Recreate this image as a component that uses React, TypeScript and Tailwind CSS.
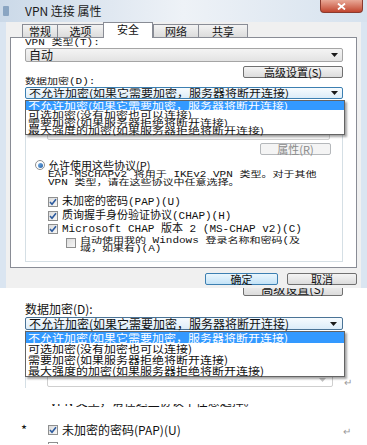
import React from 'react';

const cjk = "font-['Noto_Sans_CJK_SC',sans-serif]";
const mono = "font-['Liberation_Mono','Noto_Sans_CJK_SC',monospace]";

const OPTIONS = [
  '不允许加密(如果它需要加密，服务器将断开连接)',
  '可选加密(没有加密也可以连接)',
  '需要加密(如果服务器拒绝将断开连接)',
  '最大强度的加密(如果服务器拒绝将断开连接)',
];

function Arrow({ faint = false }: { faint?: boolean }) {
  return (
    <svg width="7" height="4" viewBox="0 0 7 4" className="shrink-0">
      <polygon points="0,0 7,0 3.5,4" fill={faint ? '#c4c4c4' : '#1a1a1a'} />
    </svg>
  );
}

function Check({ checked = true }: { checked?: boolean }) {
  return (
    <div className="flex h-[10px] w-[10px] shrink-0 items-center justify-center border border-[#8e8f8f] bg-gradient-to-br from-[#dcdcdc] to-[#f7f7f7]">
      {checked && (
        <svg width="8" height="8" viewBox="0 0 8 8">
          <path d="M1 4 L3 6.2 L7 1.2" stroke="#2c5a9e" strokeWidth="1.6" fill="none" />
        </svg>
      )}
    </div>
  );
}

// squashed text line, the dialog capture is vertically compressed
function Flat({ children }: { children: React.ReactNode }) {
  return (
    <div className="h-[8px] whitespace-nowrap leading-[8px]">
      <span className="block origin-top-left scale-y-[0.75] leading-[11px]">{children}</span>
    </div>
  );
}

function Dialog() {
  return (
    <div className="flex h-[288px] flex-col bg-[#dae5f1]">
      {/* title bar */}
      <div className="relative flex h-[22px] shrink-0 items-center bg-gradient-to-r from-[#cbd9e8] via-[#eef2f7] to-[#d6e2ee]">
        <div className="ml-[3px] h-[10px] w-[6px] rounded-[1px] bg-[#8aa5c2]" />
        <span className={`ml-[16px] text-[12px] text-[#1b1b1b] ${cjk}`}>VPN 连接 属性</span>
        <div className="absolute right-[4px] top-0 flex h-[13px] w-[43px] items-center justify-center rounded-b-[4px] border border-t-0 border-[#8a3a2e] bg-gradient-to-b from-[#e8a897] to-[#c0442e]">
          <svg width="9" height="7" viewBox="0 0 9 7">
            <path d="M1 0.5 L8 6.5 M8 0.5 L1 6.5" stroke="white" strokeWidth="1.8" />
          </svg>
        </div>
      </div>

      <div className={`mx-[6px] flex flex-1 flex-col bg-[#f0f0f0] px-[4px] text-[11px] text-[#111] ${mono}`}>
        {/* tabs */}
        <div className={`mt-[2px] flex h-[13px] items-end pl-[12px] text-[11px] ${cjk}`}>
          {[
            ['常规', 'w-[35px]'],
            ['选项', 'w-[46px]'],
            ['安全', 'w-[50px]'],
            ['网络', 'w-[45px]'],
            ['共享', 'w-[50px]'],
          ].map(([t, w]) =>
            t === '安全' ? (
              <div
                key={t}
                className={`${w} relative z-10 -mb-px flex h-[16px] items-start justify-center border border-b-0 border-[#898c95] bg-white leading-[12px]`}
              >
                {t}
              </div>
            ) : (
              <div
                key={t}
                className={`${w} flex h-[13px] items-center justify-center border border-b-0 border-r-0 border-[#898c95] bg-gradient-to-b from-[#f3f3f3] to-[#dcdcdc] leading-[12px] last:border-r`}
              >
                {t}
              </div>
            )
          )}
        </div>

        {/* panel */}
        <div className="relative flex h-[231px] shrink-0 flex-col border border-[#898c95] bg-white pl-[14px] pr-[13px]">
          <div className="h-[10px] pt-[1px]">
            <Flat>VPN 类型(T):</Flat>
          </div>
          <div className={`flex h-[14px] items-center justify-between rounded-[2px] border border-[#a5a5a5] bg-gradient-to-b from-[#f4f4f4] to-[#e3e3e3] pl-[3px] pr-[4px] text-[12px] ${cjk}`}>
            <span className="leading-[12px]">自动</span>
            <Arrow />
          </div>
          <div className="mt-[4px] flex justify-end">
            <div className={`flex h-[12px] w-[100px] items-center justify-center rounded-[2px] border border-[#707070] bg-gradient-to-b from-[#f4f4f4] to-[#dcdcdc] text-[11px] leading-[10px] ${cjk}`}>
              高级设置(S)
            </div>
          </div>
          <div className="h-[9px]">
            <Flat>数据加密(D):</Flat>
          </div>
          <div className={`flex h-[12px] items-center justify-between rounded-[2px] border border-[#3c7fb1] bg-gradient-to-b from-[#f7fbfe] to-[#dcecf8] pl-[3px] pr-[4px] text-[12px] ${cjk}`}>
            <span className="inline-block origin-left scale-y-[0.85] leading-[10px]">{OPTIONS[0]}</span>
            <Arrow />
          </div>

          {/* authentication group */}
          <div className="mt-[6px] flex h-[157px] flex-col border border-[#d5dfe5] pl-[9px]">
            <div className="ml-[12px] mt-[20px] flex h-[14px] w-[283px] items-center justify-end rounded-[2px] border border-[#d0d0d0] bg-[#f7f7f7] pr-[4px]">
              <Arrow faint />
            </div>
            <div className="mt-[3px] flex justify-end pr-[11px]">
              <div className={`flex h-[12px] w-[71px] items-center justify-center rounded-[2px] border border-[#b5b8bb] bg-[#f4f4f4] text-[11px] leading-[10px] text-[#8a8a8a] ${cjk}`}>
                属性(R)
              </div>
            </div>
            <div className="mt-[5px] flex h-[10px] items-center gap-[3px]">
              <div className="flex h-[10px] w-[10px] items-center justify-center rounded-full border border-[#8e8f8f] bg-white">
                <div className="h-[5px] w-[5px] rounded-full bg-gradient-to-br from-[#7fb4e6] to-[#1f5fa6]" />
              </div>
              <span className={`text-[11px] leading-[10px] ${cjk}`}>允许使用这些协议(P)</span>
            </div>
            <div className="ml-[13px] mt-[1px]">
              <Flat>EAP-MSCHAPv2 将用于 IKEv2 VPN 类型。对于其他</Flat>
              <Flat>VPN 类型，请在这些协议中任意选择。</Flat>
            </div>
            <div className="ml-[13px] mt-[10px] flex h-[10px] items-center gap-[4px]">
              <Check />
              <span className="leading-[10px]">未加密的密码(PAP)(U)</span>
            </div>
            <div className="ml-[13px] mt-[4px] flex h-[10px] items-center gap-[4px]">
              <Check />
              <span className="leading-[10px]">质询握手身份验证协议(CHAP)(H)</span>
            </div>
            <div className="ml-[13px] mt-[3px] flex h-[10px] items-center gap-[4px]">
              <Check />
              <span className="leading-[10px]">Microsoft CHAP 版本 2 (MS-CHAP v2)(C)</span>
            </div>
            <div className="ml-[31px] mt-[3px] flex items-start gap-[4px]">
              <div className="mt-[1px]">
                <Check checked={false} />
              </div>
              <div>
                <Flat>自动使用我的 Windows 登录名称和密码(及</Flat>
                <Flat>域，如果有)(A)</Flat>
              </div>
            </div>
          </div>

          {/* open dropdown */}
          <div className={`absolute left-[14px] top-[62px] z-20 w-[320px] border border-[#646464] bg-white shadow-[2px_2px_2px_rgba(0,0,0,0.35)] text-[12px] ${cjk}`}>
            {OPTIONS.map((o, i) => (
              <div
                key={o}
                className={`h-[8px] whitespace-nowrap pl-[2px] leading-[8px] first:h-[9px] ${i === 0 ? 'bg-[#3399ff] text-white' : 'text-[#111]'}`}
              >
                <span className="block origin-top-left scale-y-[0.72] leading-[12px]">{o}</span>
              </div>
            ))}
          </div>
        </div>

        {/* buttons */}
        <div className={`mt-[5px] flex justify-end gap-[9px] text-[11px] ${cjk}`}>
          <div className="flex h-[12px] w-[73px] items-center justify-center rounded-[2px] border border-[#3c7fb1] bg-gradient-to-b from-[#eaf6fd] to-[#c4e3f7] leading-[10px]">
            确定
          </div>
          <div className="flex h-[12px] w-[70px] items-center justify-center rounded-[2px] border border-[#707070] bg-gradient-to-b from-[#f4f4f4] to-[#dcdcdc] leading-[10px]">
            取消
          </div>
        </div>
      </div>
    </div>
  );
}

function Detail() {
  return (
    <div className={`relative flex h-[157px] flex-col bg-white text-[12px] text-[#111] ${cjk}`}>
      <div className="flex h-[8px] justify-end overflow-hidden pr-[24px]">
        <div className="-mt-[6px] flex h-[14px] w-[100px] shrink-0 items-center justify-center rounded-[2px] border border-[#707070] bg-gradient-to-b from-[#f4f4f4] to-[#dcdcdc] leading-[12px]">
          高级设置(S)
        </div>
      </div>
      <div className="ml-[25px] mt-[6px] leading-[14px]">数据加密(D):</div>
      <div className="ml-[25px] mt-[1px] flex h-[13px] w-[318px] items-center justify-between rounded-[2px] border border-[#4a7396] bg-gradient-to-b from-[#f7fbfe] to-[#dcecf8] pl-[3px] pr-[5px]">
        <span className="leading-[12px]">{OPTIONS[0]}</span>
        <Arrow />
      </div>
      <div className="ml-[25px] flex h-[58px] items-end border-l border-[#d5dfe5]">
        <div className="mb-[1px] ml-[21px] flex h-[17px] w-[286px] items-end justify-end rounded-[2px] border border-[#cfcfcf] pb-[4px] pr-[6px]">
          <Arrow faint />
        </div>
        <span className="mb-[1px] ml-[11px] text-[10px] leading-[10px] text-[#9a9a9a]">↵</span>
      </div>
      <div className="ml-[50px] mt-[16px] h-[4px] overflow-hidden">
        <div className="-mt-[10px] whitespace-nowrap leading-[14px]">VPN 类型，请在这些协议中任意选择。</div>
      </div>
      <div className="mt-[15px] flex h-[14px] items-center">
        <span className="ml-[21px] w-[27px] text-[13px] leading-[14px]">*</span>
        <Check />
        <span className="ml-[4px] leading-[14px]">未加密的密码(PAP)(U)</span>
        <span className="ml-auto mr-[16px] text-[10px] text-[#9a9a9a]">↵</span>
      </div>
      <div className="ml-[48px] mt-[5px] h-[2px] w-[10px] border-x border-t border-[#8e8f8f]" />

      {/* open dropdown, enlarged crop */}
      <div className="absolute left-[25px] top-[43px] z-20 w-[320px] border border-[#646464] bg-white shadow-[2px_2px_2px_rgba(0,0,0,0.35)]">
        {OPTIONS.map((o, i) => (
          <div
            key={o}
            className={`h-[11px] whitespace-nowrap pl-[2px] leading-[11px] ${i === 0 ? 'bg-[#3399ff] text-white' : 'text-[#111]'}`}
          >
            <span className="block origin-top-left scale-y-[0.88] leading-[12px]">{o}</span>
          </div>
        ))}
      </div>
    </div>
  );
}

export default function App() {
  return (
    <div className="h-[445px] w-[367px] overflow-hidden bg-white">
      <Dialog />
      <Detail />
    </div>
  );
}
